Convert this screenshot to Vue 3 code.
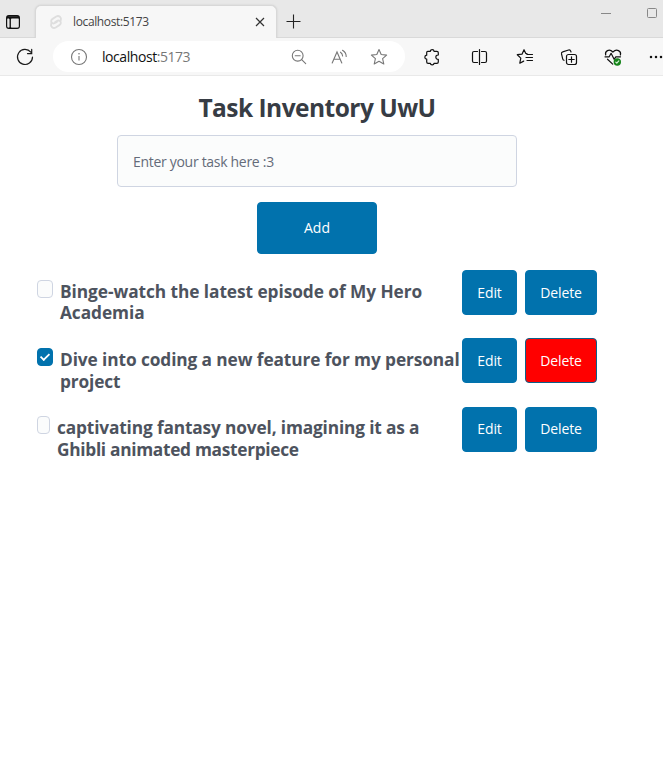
<script setup>
import { ref } from 'vue'

const draft = ref('')
const tasks = ref([
  { id: 1, lines: ['Binge-watch the latest episode of My Hero', 'Academia'], done: false },
  { id: 2, lines: ['Dive into coding a new feature for my personal', 'project'], done: true },
  { id: 3, lines: ['captivating fantasy novel, imagining it as a', 'Ghibli animated masterpiece'], done: false, narrow: true }
])
</script>

<template>
  <div class="window">
    <header class="tabbar">
      <svg class="panel-icon" width="16" height="16" viewBox="0 0 16 16" fill="none" stroke="#111" stroke-width="1.4">
        <rect x="1.7" y="1.7" width="12.6" height="12.6" rx="2.2" />
        <path d="M2 3.4h12M5.2 4v10" stroke-width="2.2" />
        <path d="M5.9 5.1h7.6v8.2H5.9z" fill="#e8e8e8" stroke="none" />
        <path d="M2.5 5.1h2v8.2h-2z" fill="#e8e8e8" stroke="none" />
      </svg>
      <div class="tab">
        <svg class="favicon" width="16" height="16" viewBox="0 0 16 16" fill="none" stroke="#dedede" stroke-width="1.9" stroke-linecap="round">
          <path d="M12.8 6.300c1-2.900-1.900-5.300-4.500-3.800L4.600 4.900C2.800 6 2.700 8 4.200 9c1.200.8 2.300.4 3.200-.2l1.400-.9" />
          <path d="M3.200 9.700c-1 2.900 1.900 5.300 4.500 3.800l3.700-2.400c1.800-1.100 1.900-3.100.4-4.100-1.200-.8-2.300-.4-3.200.2L7.200 8.100" />
        </svg>
        <span class="tab-title">localhost:5173</span>
        <svg class="tab-close" width="10" height="10" viewBox="0 0 10 10" stroke="#333" stroke-width="1.2"><path d="M1 1l8 8M9 1L1 9" /></svg>
      </div>
      <svg class="tab-new" width="15" height="15" viewBox="0 0 15 15" stroke="#222" stroke-width="1.1"><path d="M.5 7.500h14M7.500.5v14" /></svg>
      <svg class="win-min" width="10" height="11" viewBox="0 0 10 11" stroke="#888"><path d="M0 5.500h10" /></svg>
      <svg class="win-max" width="11" height="11" viewBox="0 0 11 11" fill="none" stroke="#888"><rect x=".5" y=".5" width="9" height="9" rx="1" /></svg>
    </header>

    <div class="toolbar">
      <svg class="reload" width="18" height="18" viewBox="0 0 18 18" fill="none" stroke="#1a1a1a" stroke-width="1.2" stroke-linecap="round">
        <path d="M16.500 9A7.500 7.500 0 1 1 14.800 4.200M15.700 1.400v4.200h-4.200" />
      </svg>
      <div class="address">
        <svg class="info" width="18" height="18" viewBox="0 0 18 18" fill="none" stroke="#777" stroke-width="1.1">
          <circle cx="9" cy="9" r="7.500" /><path d="M9 8v4.600" /><circle cx="9" cy="5.800" r=".8" fill="#777" stroke="none" />
        </svg>
        <span class="url">localhost<i>:5173</i></span>
        <svg class="a-zoom" width="16" height="16" viewBox="0 0 16 16" fill="none" stroke="#777" stroke-width="1.1" stroke-linecap="round">
          <circle cx="6.700" cy="6.700" r="5.400" /><path d="M4.200 6.700h5M10.700 10.700l4 4" />
        </svg>
        <svg class="a-read" width="17" height="16" viewBox="0 0 17 16" fill="none" stroke="#777" stroke-width="1.1" stroke-linecap="round">
          <path d="M1.200 14L6 3l4.800 11M2.900 10.300h6.200M9.500 3.200c1.300.9 2 2.200 2.100 3.800M11.500 1.300c2.500 1.500 3.700 3.500 3.700 6.200" />
        </svg>
        <svg class="a-star" width="18" height="18" viewBox="0 0 18 18" fill="none" stroke="#777" stroke-width="1.1" stroke-linejoin="round">
          <path d="M9 1.600l2.200 4.900 5.400.6-4 3.600 1.200 5.300L9 13.300l-4.800 2.700 1.200-5.300-4-3.600 5.400-.6z" />
        </svg>
      </div>
      <svg class="puzzle" width="18" height="18" viewBox="0 0 18 18" fill="none" stroke="#111" stroke-width="1.2" stroke-linejoin="round">
        <path d="M4.700 3.300H7.400c0-2.300 3.600-2.300 3.600 0h2.900c.8 0 1.400.6 1.400 1.400v2.300c-3-.3-3.600 4.300 0 4.300v2.600c0 .8-.6 1.400-1.400 1.400H11c0 2.200-3.600 2.200-3.600 0H5.100c-.8 0-1.400-.6-1.400-1.400v-2.800c-2.500-.2-2.500-3.700 0-3.900V4.600c0-.7.400-1.300 1-1.300z" />
      </svg>
      <span class="divider"></span>
      <svg class="split" width="18" height="18" viewBox="0 0 18 18" fill="none" stroke="#111" stroke-width="1.200" stroke-linecap="round">
        <path d="M6.500 3.500H3c-.9 0-1.500.6-1.500 1.500v8c0 .9.600 1.500 1.500 1.500h3.500M10.500 3.500H14c.9 0 1.500.6 1.500 1.500v8c0 .9-.6 1.500-1.500 1.500h-3.500M8.500 1.500v15" />
      </svg>
      <svg class="favs" width="18" height="18" viewBox="0 0 18 18" fill="none" stroke="#111" stroke-width="1.200" stroke-linecap="round" stroke-linejoin="round">
        <path d="M11 5.600L9.800 5.500 8 1.700 6 6.200l-4.700.5 3.500 3.400-1 5.100 3.900-2.100M11 6.500h5.500M10 9.500h6.500M11 12.500h5.500" />
      </svg>
      <svg class="collections" width="18" height="18" viewBox="0 0 18 18" fill="none" stroke="#111" stroke-width="1.200" stroke-linecap="round">
        <rect x="6.500" y="6.500" width="10" height="10" rx="2" /><path d="M11.500 8.800v5.400M8.800 11.500h5.400M4 12.300C3.200 12 2.900 11.500 2.700 10.800L1.500 5.900c-.2-1 .3-1.800 1.200-2L8.600 2c1-.3 1.800.2 2.100 1.100l.3.900" />
      </svg>
      <svg class="health" width="18" height="18" viewBox="0 0 18 18" fill="none" stroke="#111" stroke-width="1.200" stroke-linecap="round" stroke-linejoin="round">
        <path d="M1.700 7C.6 3.200 5.100.1 8.900 4c3.900-3.900 8.600-.7 7.500 3M1 8.800h4.200l1.900-3.500 3 6 1.700-2.500h4.700M3.500 11.200l5.200 4.900" />
        <circle cx="13.300" cy="14" r="3.700" fill="#15831a" stroke="none" /><path d="M11.800 14.200l1 1 2-2.300" stroke="#d7f3d7" />
      </svg>
      <svg class="more" width="14" height="4" viewBox="0 0 14 4" fill="#111"><circle cx="2" cy="2" r="1.250" /><circle cx="7" cy="2" r="1.250" /><circle cx="12" cy="2" r="1.250" /></svg>
    </div>

    <main class="page">
      <h1>Task Inventory UwU</h1>
      <input v-model="draft" class="entry" type="text" placeholder="Enter your task here :3" />
      <button class="btn add">Add</button>
      <ul class="tasks">
        <li v-for="task in tasks" :key="task.id" class="task">
          <input v-model="task.done" type="checkbox" class="check" :class="{ narrow: task.narrow }" />
          <h2 class="label" :class="'label-' + task.id">
            <span v-for="(line, i) in task.lines" :key="i" :class="'line-' + i">{{ line }}</span>
          </h2>
          <button class="btn edit">Edit</button>
          <button class="btn delete" :class="{ hot: task.done }">Delete</button>
        </li>
      </ul>
    </main>
  </div>
</template>

<style>
body { margin: 0; background: #fff; }
</style>

<style scoped>
* { box-sizing: border-box; }
.window { width: 663px; height: 762px; overflow: hidden; background: #fff; font-family: "Open Sans", "Noto Sans", sans-serif; }
svg { display: block; flex: none; }

.tabbar { display: flex; height: 38px; background: #e8e8e8; border-bottom: 1px solid #d9d9d9; align-items: flex-start; padding-left: 5px; }
.panel-icon { margin-top: 14px; }
.tab { display: flex; align-items: center; width: 242px; height: 33px; margin: 5px 0 0 14px; padding: 0 12px; border: 1px solid #d8d8d8; border-bottom: 0; border-radius: 6px 6px 0 0; background: #f7f7f7; box-shadow: 0 0 2px #c8c8c8; clip-path: inset(-3px -3px 0 -3px); flex: none; }
.tab-title { margin-left: 9px; font-size: 12px; line-height: 16px; color: #444; letter-spacing: -0.37px; }
.tab-close { margin-left: auto; margin-right: -1px; }
.tab-new { margin: 14px 0 0 9px; }
.win-min { margin: 8px 0 0 auto; }
.win-max { margin: 8px 5px 0 36px; }

.toolbar { display: flex; align-items: center; height: 38px; padding-left: 16px; background: #f7f7f7; border-bottom: 1px solid #e9e9e9; }
.address { display: flex; align-items: center; width: 352px; height: 31px; margin-left: 19px; padding-left: 17px; border-radius: 16px; background: #fff; flex: none; }
.url { width: 89px; margin-left: 14px; padding-top: 1px; font-size: 14px; line-height: 20px; color: #111; letter-spacing: -0.44px; white-space: nowrap; }
.url i { font-style: normal; color: #777; }
.a-zoom { margin-left: 100px; }
.a-read { margin-left: 24px; }
.a-star { margin-left: 22px; }
.puzzle { margin-left: 18px; }
.divider { width: 1px; height: 16px; margin-left: 15px; background: #d0d0d0; }
.split { margin-left: 15px; }
.favs { margin-left: 27px; }
.collections, .health { margin-left: 26px; }
.more { margin-left: 27px; }

.page { display: flex; flex-direction: column; align-items: center; width: 634px; padding-top: 13px; }
h1 { margin: 0; height: 46px; font-size: 24.500px; line-height: 37px; font-weight: 700; letter-spacing: -0.53px; color: #373c44; white-space: nowrap; }
.entry { width: 400px; height: 52px; padding: 0 15px; border: 1px solid #cfd5e2; border-radius: 4px; background: #fbfcfc; font: 14px "Open Sans", sans-serif; letter-spacing: -0.3px; color: #646b79; }
.entry::placeholder { color: #646b79; opacity: 1; }
.btn { padding: 0 0 1px; border: 1px solid #0172ad; border-radius: 4px; background: #0172ad; color: #fff; font: 14px "Open Sans", sans-serif; flex: none; }
.add { width: 120px; height: 52px; margin-top: 15px; }
.tasks { width: 560px; margin: 16px 0 0; padding: 0; list-style: none; }
.task { display: flex; align-items: flex-start; height: 68.300px; }
.check { appearance: none; width: 16px; height: 18px; margin: 10px 0 0; border: 1px solid #cfd5e2; border-radius: 4px; background: #fbfcfc; flex: none; }
.check.narrow { width: 13px; margin-top: 9px; }
.check:checked { display: grid; place-items: center; border-color: #0172ad; background: #0172ad; }
.check:checked::after { content: ""; width: 8px; height: 4px; margin-top: -3px; border: solid #fff; border-width: 0 0 2px 2px; transform: rotate(-45deg) scale(.9); }
.label { display: flex; flex-direction: column; align-items: flex-start; width: 402px; margin: 11px 0 0 7px; font-size: 17.300px; line-height: 21.500px; font-weight: 700; color: #4d535e; white-space: nowrap; letter-spacing: -0.15px; flex: none; }
.label-1 { letter-spacing: -0.06px; line-height: 21px; }
.label-2 .line-0 { letter-spacing: -0.1px; }
.label-3 { width: 405px; margin-top: 10.500px; }
.label-3 .line-1 { letter-spacing: -0.3px; }
.edit { width: 55px; height: 45px; letter-spacing: -0.1px; }
.delete { width: 72px; height: 45px; margin-left: 8px; letter-spacing: -0.15px; }
.hot { background: #f00; border-color: #0b6089; }
</style>
